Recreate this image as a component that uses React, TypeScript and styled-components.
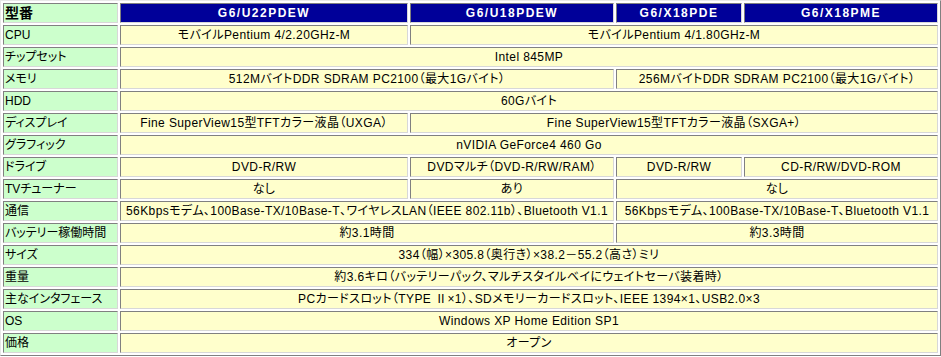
import styled, { createGlobalStyle } from 'styled-components';

const GlobalStyle = createGlobalStyle`
  html, body {
    margin: 0;
    padding: 0;
    background: #ffffff;
  }
`;

type Cell = { text: string; span?: number };
type Row = { label: string; cells: Cell[] };

const models = ['G6/U22PDEW', 'G6/U18PDEW', 'G6/X18PDE', 'G6/X18PME'];

const rows: Row[] = [
    { label: 'CPU', cells: [{ text: 'モバイルPentium 4/2.20GHz-M' }, { text: 'モバイルPentium 4/1.80GHz-M', span: 3 }] },
    { label: 'チップセット', cells: [{ text: 'Intel 845MP', span: 4 }] },
    { label: 'メモリ', cells: [{ text: '512MバイトDDR SDRAM PC2100（最大1Gバイト）', span: 2 }, { text: '256MバイトDDR SDRAM PC2100（最大1Gバイト）', span: 2 }] },
    { label: 'HDD', cells: [{ text: '60Gバイト', span: 4 }] },
    { label: 'ディスプレイ', cells: [{ text: 'Fine SuperView15型TFTカラー液晶（UXGA）' }, { text: 'Fine SuperView15型TFTカラー液晶（SXGA+）', span: 3 }] },
    { label: 'グラフィック', cells: [{ text: 'nVIDIA GeForce4 460 Go', span: 4 }] },
    { label: 'ドライブ', cells: [{ text: 'DVD-R/RW' }, { text: 'DVDマルチ（DVD-R/RW/RAM）' }, { text: 'DVD-R/RW' }, { text: 'CD-R/RW/DVD-ROM' }] },
    { label: 'TVチューナー', cells: [{ text: 'なし' }, { text: 'あり' }, { text: 'なし', span: 2 }] },
    { label: '通信', cells: [{ text: '56Kbpsモデム、100Base-TX/10Base-T、ワイヤレスLAN（IEEE 802.11b）、Bluetooth V1.1', span: 2 }, { text: '56Kbpsモデム、100Base-TX/10Base-T、Bluetooth V1.1', span: 2 }] },
    { label: 'バッテリー稼働時間', cells: [{ text: '約3.1時間', span: 2 }, { text: '約3.3時間', span: 2 }] },
    { label: 'サイズ', cells: [{ text: '334（幅）×305.8（奥行き）×38.2－55.2（高さ）ミリ', span: 4 }] },
    { label: '重量', cells: [{ text: '約3.6キロ（バッテリーパック、マルチスタイルベイにウェイトセーバ装着時）', span: 4 }] },
    { label: '主なインタフェース', cells: [{ text: 'PCカードスロット（TYPE Ⅱ×1）、SDメモリーカードスロット、IEEE 1394×1、USB2.0×3', span: 4 }] },
    { label: 'OS', cells: [{ text: 'Windows XP Home Edition SP1', span: 4 }] },
    { label: '価格', cells: [{ text: 'オープン', span: 4 }] },
];

const widths = [115, 288, 204, 126, 194];

const App: React.FC = () => {
    return (
        <>
            <GlobalStyle />
            <SpecTable>
                <colgroup>
                    {widths.map((w, i) => <col key={i} style={{ width: w }} />)}
                </colgroup>
                <tbody>
                    <tr>
                        <LabelCell as="th" $head>型番</LabelCell>
                        {models.map(m => <HeadCell key={m}>{m}</HeadCell>)}
                    </tr>
                    {rows.map(r => (
                        <tr key={r.label}>
                            <LabelCell>{r.label}</LabelCell>
                            {r.cells.map((c, i) => <DataCell key={i} colSpan={c.span ?? 1}>{c.text}</DataCell>)}
                        </tr>
                    ))}
                </tbody>
            </SpecTable>
        </>
    );
}

const SpecTable = styled.table`
    width: 941px;
    table-layout: fixed;
    border-collapse: separate;
    border-spacing: 2px;
    border: 1px solid;
    border-color: #e8e8e8 #808080 #808080 #e8e8e8;
    font-family: "Liberation Sans", "Noto Sans CJK JP", sans-serif;
    font-size: 12px;
    font-feature-settings: "palt";
    color: #000000;
`;

const BaseCell = styled.td`
    box-sizing: border-box;
    height: 20px;
    padding: 0 1px;
    border: 1px solid;
    border-color: #808080 #d8d8d8 #d8d8d8 #808080;
    white-space: nowrap;
    overflow: hidden;
    line-height: 18px;
`;

const LabelCell = styled(BaseCell)<{ $head?: boolean }>`
    background: #ccffcc;
    text-align: left;
    font-weight: ${p => (p.$head ? 'bold' : 'normal')};
    font-size: ${p => (p.$head ? '14px' : '12px')};
`;

const HeadCell = styled(BaseCell).attrs({ as: 'th' })`
    background: #000099;
    color: #ffffff;
    font-weight: bold;
    text-align: center;
    letter-spacing: 1.5px;
`;

const DataCell = styled(BaseCell)`
    background: #ffffcc;
    text-align: center;
    letter-spacing: 0.4px;
`;

export default App;
